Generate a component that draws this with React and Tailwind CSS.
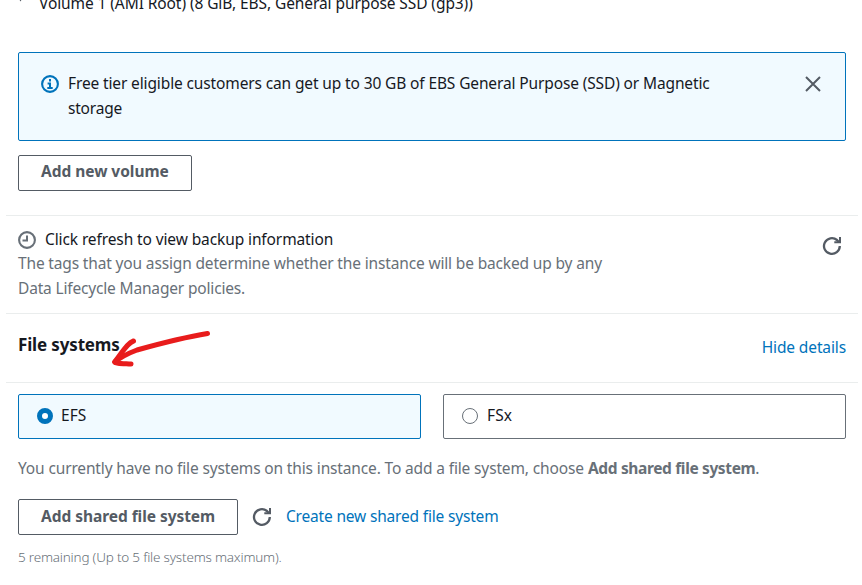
import React from "react";

function Refresh() {
  return (
    <svg width="20" height="20" viewBox="0 0 20 20" fill="none" stroke="#545b64" strokeWidth="2.3">
      <path d="M17.800 10A7.900 7.900 0 1 1 15 4L17 6" />
      <path d="M18 1V6.200H12.300" strokeWidth="2" />
    </svg>
  );
}

function Divider() {
  return <div className="ml-[6px] h-px w-[852px] bg-[#eaeded]" />;
}

export default function App() {
  return (
    <div className="relative h-[585px] w-[862px] overflow-hidden bg-white font-['Noto_Sans',sans-serif] text-[15.5px] leading-[25px] whitespace-nowrap text-[#16191f]">
      <div className="-mt-[9px] ml-[18px] flex h-[25px]">
        <div className="flex w-[21px] pt-[8px]">
          <svg width="6" height="3" viewBox="0 0 6 3"><path d="M1 0h3L2.5 2.5z" fill="#545b64" /></svg>
        </div>
        <span className="tracking-[-0.09px]">Volume 1 (AMI Root) (8 GiB, EBS, General purpose SSD (gp3))</span>
      </div>

      <div className="mt-[36px] ml-[18px] flex h-[89px] w-[828px] rounded-[2px] border border-[#0073bb] bg-[#f1faff] pt-[18px] pl-[22px]">
        <svg className="mt-[4px]" width="18" height="18" viewBox="0 0 18 18" fill="none" stroke="#0073bb">
          <circle cx="9" cy="9" r="7.9" strokeWidth="2.1" />
          <path d="M9 4v2.400M6.600 8.500H9v4.500M6.300 13h5.400" strokeWidth="2" />
        </svg>
        <div className="ml-[9px] w-[737px]">
          <div className="tracking-[-0.13px]">Free tier eligible customers can get up to 30 GB of EBS General Purpose (SSD) or Magnetic</div>
          <div className="tracking-[-0.2px]">storage</div>
        </div>
        <svg className="mt-[5px]" width="16" height="16" viewBox="0 0 16 16" stroke="#545b64" strokeWidth="2">
          <path d="M1 1l14 14M15 1L1 15" />
        </svg>
      </div>

      <button className="mt-[14px] ml-[18px] flex h-[36px] w-[174px] rounded-[2px] border border-[#545b64] pt-[3px] pl-[22px] font-bold text-[#545b64]">
        <span className="tracking-[-0.04px]">Add new volume</span>
      </button>

      <div className="mt-[24px]"><Divider /></div>

      <div className="ml-[18px] flex h-[97px] w-[828px] justify-between pt-[11px]">
        <div>
          <div className="flex h-[25px]">
            <svg className="mt-[4px]" width="18" height="18" viewBox="0 0 18 18" fill="none" stroke="#687078" strokeWidth="2.1">
              <circle cx="9" cy="9" r="7.9" />
              <path d="M9 4.500v5H4.500" strokeWidth="2" />
            </svg>
            <span className="ml-[9px] tracking-[-0.11px]">Click refresh to view backup information</span>
          </div>
          <div className="-mt-px tracking-[-0.155px] text-[#687078]">The tags that you assign determine whether the instance will be backed up by any</div>
          <div className="tracking-[-0.17px] text-[#687078]">Data Lifecycle Manager policies.</div>
        </div>
        <div className="mt-[9px] mr-[4px]"><Refresh /></div>
      </div>

      <Divider />

      <div className="ml-[18px] flex h-[68px] w-[828px] justify-between">
        <h2 className="pt-[18px] text-[17px] font-bold tracking-[-0.15px]">File systems</h2>
        <a className="pt-[21px] tracking-[-0.12px] text-[#0073bb]">Hide details</a>
      </div>

      <Divider />

      <div className="mt-[11px] ml-[18px] flex w-[828px] gap-[22px]">
        <label className="flex h-[45px] w-[403px] rounded-[2px] border border-[#0073bb] bg-[#f1faff] pt-[9px] pl-[18px]">
          <span className="mt-[4px] h-[16px] w-[16px] rounded-full border-5 border-[#0073bb] bg-white" />
          <span className="-mt-px ml-[8px] tracking-[0.1px]">EFS</span>
        </label>
        <label className="flex h-[45px] w-[403px] rounded-[2px] border border-[#687078] pt-[9px] pl-[18px]">
          <span className="mt-[4px] h-[16px] w-[16px] rounded-full border border-[#687078] bg-white" />
          <span className="-mt-px ml-[9px] tracking-[0.1px]">FSx</span>
        </label>
      </div>

      <div className="mt-[17px] ml-[18px] flex text-[#687078]">
        <span className="w-[570px] tracking-[-0.145px]">You currently have no file systems on this instance. To add a file system, choose</span>
        <b className="tracking-[-0.36px]">Add shared file system</b>
        <span>.</span>
      </div>

      <div className="mt-[18px] ml-[18px] flex">
        <button className="flex h-[36px] w-[220px] rounded-[2px] border border-[#545b64] pt-[4px] pl-[22px] font-bold text-[#545b64]">
          <span className="tracking-[-0.05px]">Add shared file system</span>
        </button>
        <div className="mt-[8px] ml-[14px]"><Refresh /></div>
        <a className="mt-[5px] ml-[14px] tracking-[-0.18px] text-[#0073bb]">Create new shared file system</a>
      </div>

      <div className="mt-[10px] ml-[18px] text-[13.5px] font-light tracking-[-0.2px] text-[#687078]">5 remaining (Up to 5 file systems maximum).</div>

      <svg className="absolute top-[325px] left-[105px]" width="110" height="45" viewBox="105 325 110 45" fill="none" stroke="#e81c1c" strokeWidth="5" strokeLinecap="round" strokeLinejoin="round">
        <path d="M207.500 333.500C180 338 155 345 137 350C129 353 121 357 115 362" />
        <path d="M133.500 341C127 343 122 353 114.500 362C115 363.500 122 363.500 131 364" />
      </svg>
    </div>
  );
}
